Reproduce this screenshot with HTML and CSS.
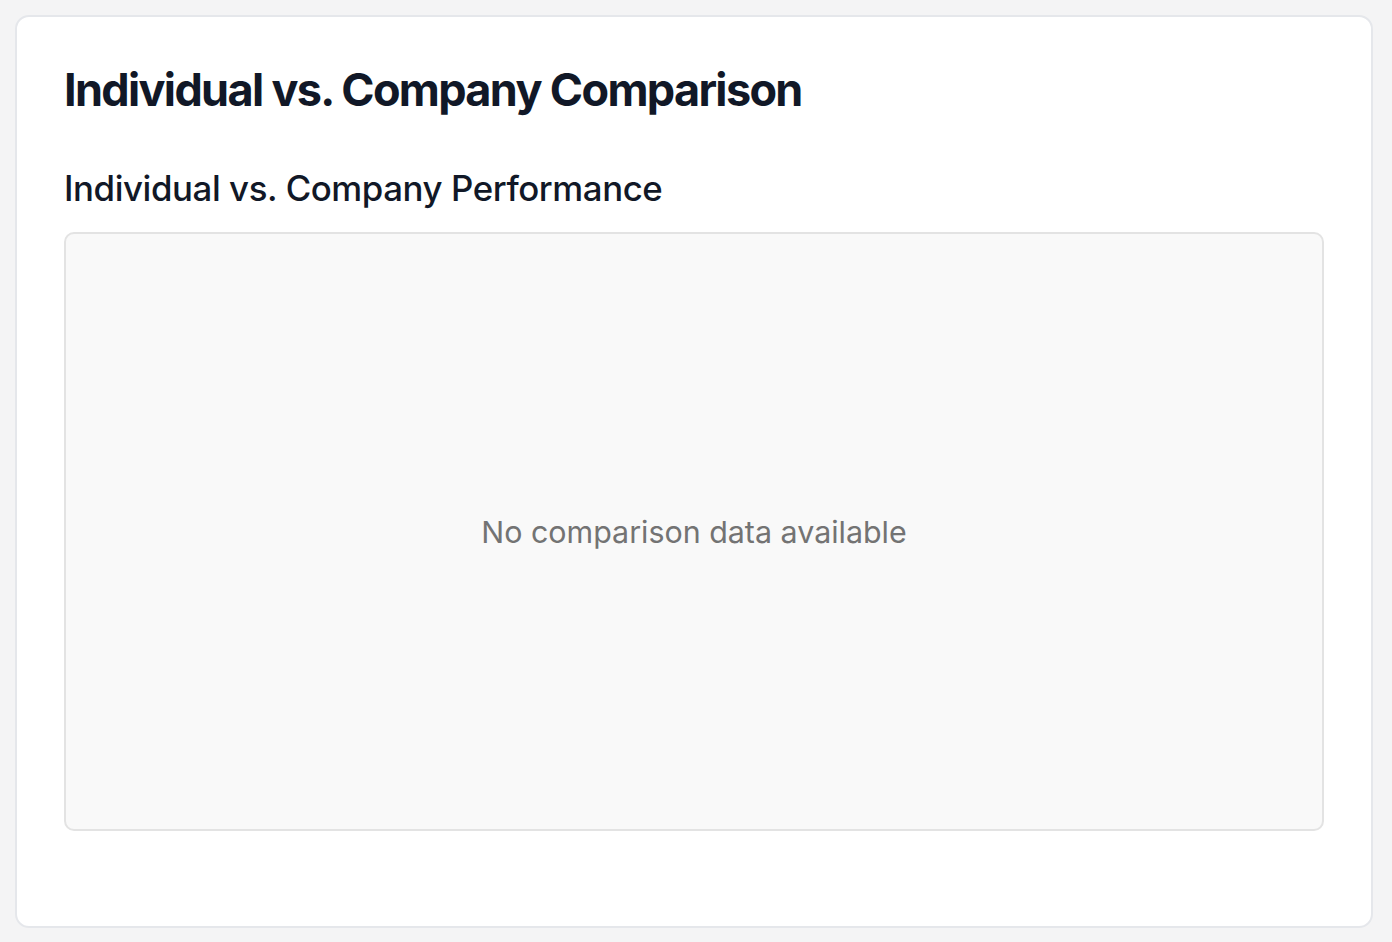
FILE: index.html
```html
<!DOCTYPE html>
<html lang="en">
<head>
<meta charset="utf-8">
<title>Individual vs. Company Comparison</title>
<link rel="stylesheet" href="styles.css">
</head>
<body>
<main class="page">
  <section class="card">
    <h1 class="title">Individual vs. Company Comparison</h1>
    <h2 class="subtitle">Individual vs. Company Performance</h2>
    <div class="chart-empty">
      <p class="empty-text">No comparison data available</p>
    </div>
  </section>
</main>
</body>
</html>
```

FILE: styles.css
```css
* { box-sizing: border-box; }
html, body {
  margin: 0;
  padding: 0;
  background: #f4f4f5;
  font-family: "Inter", "Liberation Sans", sans-serif;
}
.page {
  padding: 15px 19px 14px 15px;
  min-height: 942px;
}
.card {
  background: #ffffff;
  border: 2px solid #e5e7eb;
  border-radius: 14px;
  padding: 45px 47px 96px 47px;
  height: 913px;
}
.title {
  margin: 0;
  font-size: 45px;
  font-weight: 700;
  letter-spacing: -0.037em;
  color: #111827;
  line-height: 56px;
}
.subtitle {
  margin: 49px 0 0 0;
  font-size: 34.8px;
  font-weight: 500;
  color: #111827;
  line-height: 42px;
  letter-spacing: -0.012em;
}
.chart-empty {
  margin-top: 23px;
  height: 599px;
  background: #f9f9f9;
  border: 2px solid #e3e3e3;
  border-radius: 10px;
  display: flex;
  align-items: center;
  justify-content: center;
}
.empty-text {
  margin: 0;
  font-size: 30.4px;
  color: #737373;
}
```
